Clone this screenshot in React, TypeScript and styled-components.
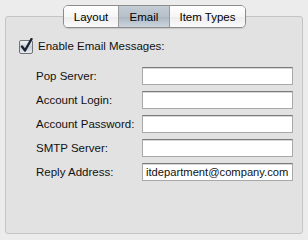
import React from "react";
import styled, { createGlobalStyle } from "styled-components";

const Global = createGlobalStyle`
  html, body { margin: 0; padding: 0; background: #ececec; }
  body { font-family: "Liberation Sans", Arial, sans-serif; font-size: 11px; color: #111; }
  * { box-sizing: border-box; }
`;

const Window = styled.div`
  width: 308px;
  height: 240px;
  padding: 5px 0 0 5px;
  background: #ececec;
`;

const TabBar = styled.div`
  position: relative;
  z-index: 1;
  display: flex;
  width: 298px;
  justify-content: center;
  padding-left: 1px;
`;

const TabGroup = styled.div`
  display: flex;
  height: 23px;
  border: 1px solid #8c8c8c;
  border-radius: 5px;
  overflow: hidden;
  box-shadow: 0 1px 1px rgba(0, 0, 0, 0.12);
`;

const Tab = styled.div<{ $active?: boolean; $w: number }>`
  width: ${(p) => p.$w}px;
  display: flex;
  align-items: center;
  justify-content: center;
  font-size: 11.5px;
  color: #000;
  background: ${(p) =>
    p.$active
      ? "linear-gradient(#c4ccd4 0%, #b6c0ca 50%, #aab5c0 51%, #cdd6de 100%)"
      : "linear-gradient(#ffffff 0%, #f6f6f6 50%, #ececec 51%, #fafafa 100%)"};
  & + & {
    border-left: 1px solid #9a9a9a;
  }
`;

const Panel = styled.div`
  margin-top: -12px;
  width: 298px;
  height: 218px;
  border: 1px solid #c4c4c4;
  border-radius: 3px;
  background: #e2e2e2;
  padding: 21px 0 0 12px;
`;

const CheckRow = styled.label`
  display: flex;
  align-items: center;
  gap: 4px;
  height: 16px;
  font-size: 11.5px;
`;

const Rows = styled.div`
  display: flex;
  flex-direction: column;
  gap: 6px;
  margin-top: 13px;
  padding-left: 18px;
`;

const Row = styled.div`
  display: flex;
  align-items: center;
  height: 18px;
`;

const Label = styled.div`
  width: 106px;
  font-size: 11.5px;
  white-space: nowrap;
`;

const Field = styled.div`
  width: 151px;
  height: 18px;
  background: #fff;
  border: 1px solid #a8a8a8;
  border-top-color: #7a7a7a;
  box-shadow: inset 0 1px 0 #d8d8d8;
  font-size: 11.2px;
  padding: 1px 0 0 3px;
  line-height: 15px;
  white-space: nowrap;
  overflow: hidden;
`;

const CheckBox = () => (
  <svg width="16" height="16" viewBox="0 0 16 16">
    <defs>
      <linearGradient id="cb" x1="0" y1="0" x2="0" y2="1">
        <stop offset="0" stopColor="#f4f6f8" />
        <stop offset="0.5" stopColor="#c8d0d8" />
        <stop offset="1" stopColor="#e8ecf0" />
      </linearGradient>
    </defs>
    <rect x="1.5" y="2.5" width="13" height="13" rx="1.5" fill="url(#cb)" stroke="#707478" />
    <path d="M4 8.5 L7 12.5 L13.5 1" fill="none" stroke="#1c2434" strokeWidth="2.4" strokeLinecap="round" strokeLinejoin="round" />
  </svg>
);

const rows: [string, string][] = [
  ["Pop Server:", ""],
  ["Account Login:", ""],
  ["Account Password:", ""],
  ["SMTP Server:", ""],
  ["Reply Address:", "itdepartment@company.com"],
];

export default function App() {
  return (
    <>
      <Global />
      <Window>
        <TabBar>
          <TabGroup>
            <Tab $w={54}>Layout</Tab>
            <Tab $w={51} $active>Email</Tab>
            <Tab $w={76}>Item Types</Tab>
          </TabGroup>
        </TabBar>
        <Panel>
          <CheckRow>
            <CheckBox />
            Enable Email Messages:
          </CheckRow>
          <Rows>
            {rows.map(([l, v]) => (
              <Row key={l}>
                <Label>{l}</Label>
                <Field>{v}</Field>
              </Row>
            ))}
          </Rows>
        </Panel>
      </Window>
    </>
  );
}
